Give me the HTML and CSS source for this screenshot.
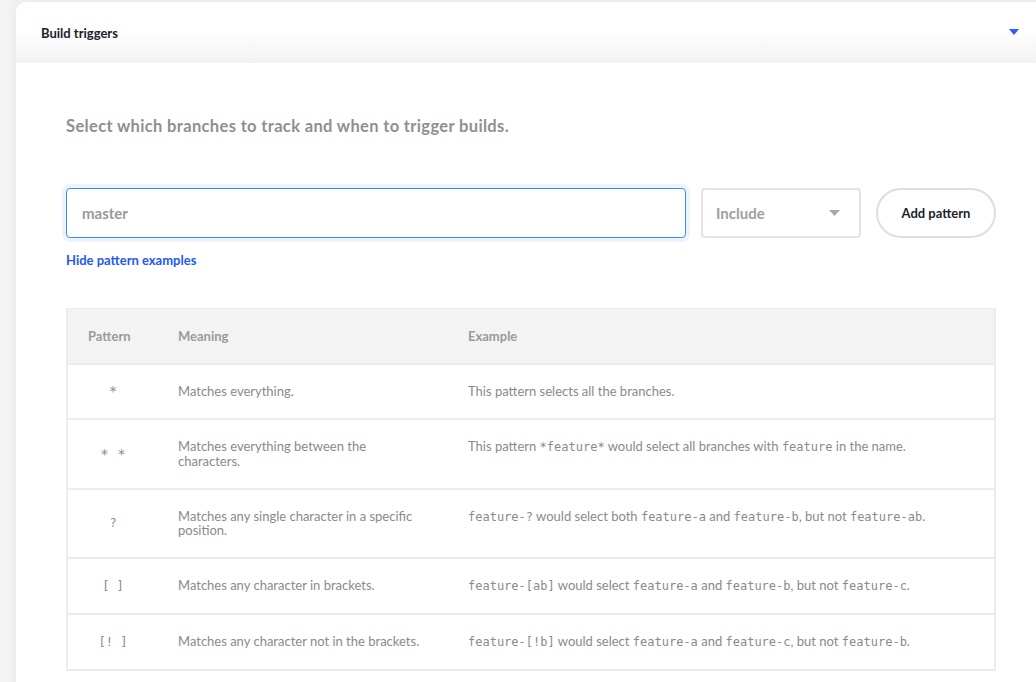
FILE: index.html
```html
<!DOCTYPE html>
<html>
<head>
<meta charset="utf-8">
<link rel="stylesheet" href="styles.css">
</head>
<body>
<div class="card">
  <div class="card-head">
    <span class="card-title">Build triggers</span>
    <svg class="chev" width="10" height="6" viewBox="0 0 10 6"><path d="M0 0H10L5 6Z" fill="#2f5bff"/></svg>
  </div>
  <div class="card-body">
    <p class="lead">Select which branches to track and when to trigger builds.</p>
    <div class="form-row">
      <div class="input">master</div>
      <div class="select"><span>Include</span><svg width="11" height="6" viewBox="0 0 11 6"><path d="M0 0H11L5.5 6Z" fill="#a8a8a8"/></svg></div>
      <button class="btn">Add pattern</button>
    </div>
    <a class="link">Hide pattern examples</a>
    <div class="table">
      <div class="tr th">
        <div class="c1">Pattern</div>
        <div class="c2">Meaning</div>
        <div class="c3">Example</div>
      </div>
      <div class="tr">
        <div class="c1 pat star">*</div>
        <div class="c2">Matches everything.</div>
        <div class="c3">This pattern selects all the branches.</div>
      </div>
      <div class="tr">
        <div class="c1 pat star">* *</div>
        <div class="c2">Matches everything between the characters.</div>
        <div class="c3">This pattern <code>*feature*</code> would select all branches with <code>feature</code> in the name.</div>
      </div>
      <div class="tr">
        <div class="c1 pat">?</div>
        <div class="c2">Matches any single character in a specific position.</div>
        <div class="c3"><code>feature-?</code> would select both <code>feature-a</code> and <code>feature-b</code>, but not <code>feature-ab</code>.</div>
      </div>
      <div class="tr">
        <div class="c1 pat">[ ]</div>
        <div class="c2">Matches any character in brackets.</div>
        <div class="c3"><code>feature-[ab]</code> would select <code>feature-a</code> and <code>feature-b</code>, but not <code>feature-c</code>.</div>
      </div>
      <div class="tr">
        <div class="c1 pat">[! ]</div>
        <div class="c2">Matches any character not in the brackets.</div>
        <div class="c3"><code>feature-[!b]</code> would select <code>feature-a</code> and <code>feature-c</code>, but not <code>feature-b</code>.</div>
      </div>
    </div>
  </div>
</div>
</body>
</html>
```
FILE: styles.css
```css
html, body {
  margin: 0;
  padding: 0;
  background: #f3f3f3;
  overflow: hidden;
  font-family: Lato, "Liberation Sans", sans-serif;
}
.card {
  margin: 2px 0 0 16px;
  width: 1050px;
  background: #fff;
  border-radius: 10px 0 0 0;
  box-shadow: 0 0 12px rgba(0,0,0,0.06);
  min-height: 700px;
}
.card-head {
  height: 61px;
  display: flex;
  align-items: center;
  padding-left: 25px;
  border-radius: 10px 0 0 0;
  background: linear-gradient(to bottom, #ffffff 0%, #ffffff 45%, #f2f2f2 100%);
}
.card-title {
  font-size: 13px;
  font-weight: 700;
  color: #1c1c2a;
  width: 968px;
}
.chev {
  display: block;
  margin-top: -2px;
}
.card-body {
  padding: 53px 0 0 50px;
  width: 930px;
}
.lead {
  margin: 0;
  font-size: 16.5px;
  letter-spacing: 0.35px;
  line-height: 20px;
  font-weight: 700;
  color: #8f8f8f;
}
.form-row {
  display: flex;
  gap: 15px;
  margin-top: 52px;
  height: 50px;
}
.input {
  width: 620px;
  box-sizing: border-box;
  border: 1px solid #3b88ee;
  border-radius: 4px;
  box-shadow: 0 0 0 4px #ebf3fd;
  display: flex;
  align-items: center;
  padding-left: 15px;
  font-size: 15px;
  font-weight: 700;
  color: #9a9a9a;
}
.select {
  width: 160px;
  box-sizing: border-box;
  border: 2px solid #e3e3e3;
  border-radius: 4px;
  display: flex;
  align-items: center;
  justify-content: space-between;
  padding: 0 19px 0 13px;
  font-size: 15px;
  font-weight: 700;
  color: #a0a0a0;
}
.btn {
  width: 120px;
  box-sizing: border-box;
  border: 2px solid #dedede;
  border-radius: 25px;
  background: #fff;
  font-family: Lato, "Liberation Sans", sans-serif;
  font-size: 13px;
  font-weight: 700;
  color: #1c1c2a;
  padding: 0;
}
.link {
  display: block;
  margin-top: 15px;
  font-size: 13px;
  line-height: 14px;
  font-weight: 700;
  color: #2357f5;
}
.table {
  margin-top: 41px;
  border: 2px solid #ececec;
  border-top: 0;
}
.tr {
  display: grid;
  grid-template-columns: 110px 290px 1fr;
  border-top: 2px solid #ececec;
  font-size: 13px;
  line-height: 14.5px;
  color: #8a8a8a;
}
.tr > div {
  padding: 19.25px 0 19.25px;
}
.th {
  background: #f3f3f3;
  font-weight: 700;
  color: #9a9a9a;
  border-top: 1px solid #ececec;
  line-height: 14px;
}
.th > div {
  padding: 20px 0 20px;
}
.c1 {
  padding-left: 20px !important;
  padding-right: 40px !important;
}
.pat {
  text-align: center;
  font-family: "DejaVu Sans Mono", monospace;
  font-size: 12px;
  display: flex;
  align-items: center;
  justify-content: center;
  white-space: pre;
}
.star {
  font-size: 14px;
}
.c2 {
  padding-right: 42px !important;
}
.c3 {
  padding-right: 20px !important;
}
code {
  font-family: "DejaVu Sans Mono", monospace;
  font-size: 12px;
}
```
